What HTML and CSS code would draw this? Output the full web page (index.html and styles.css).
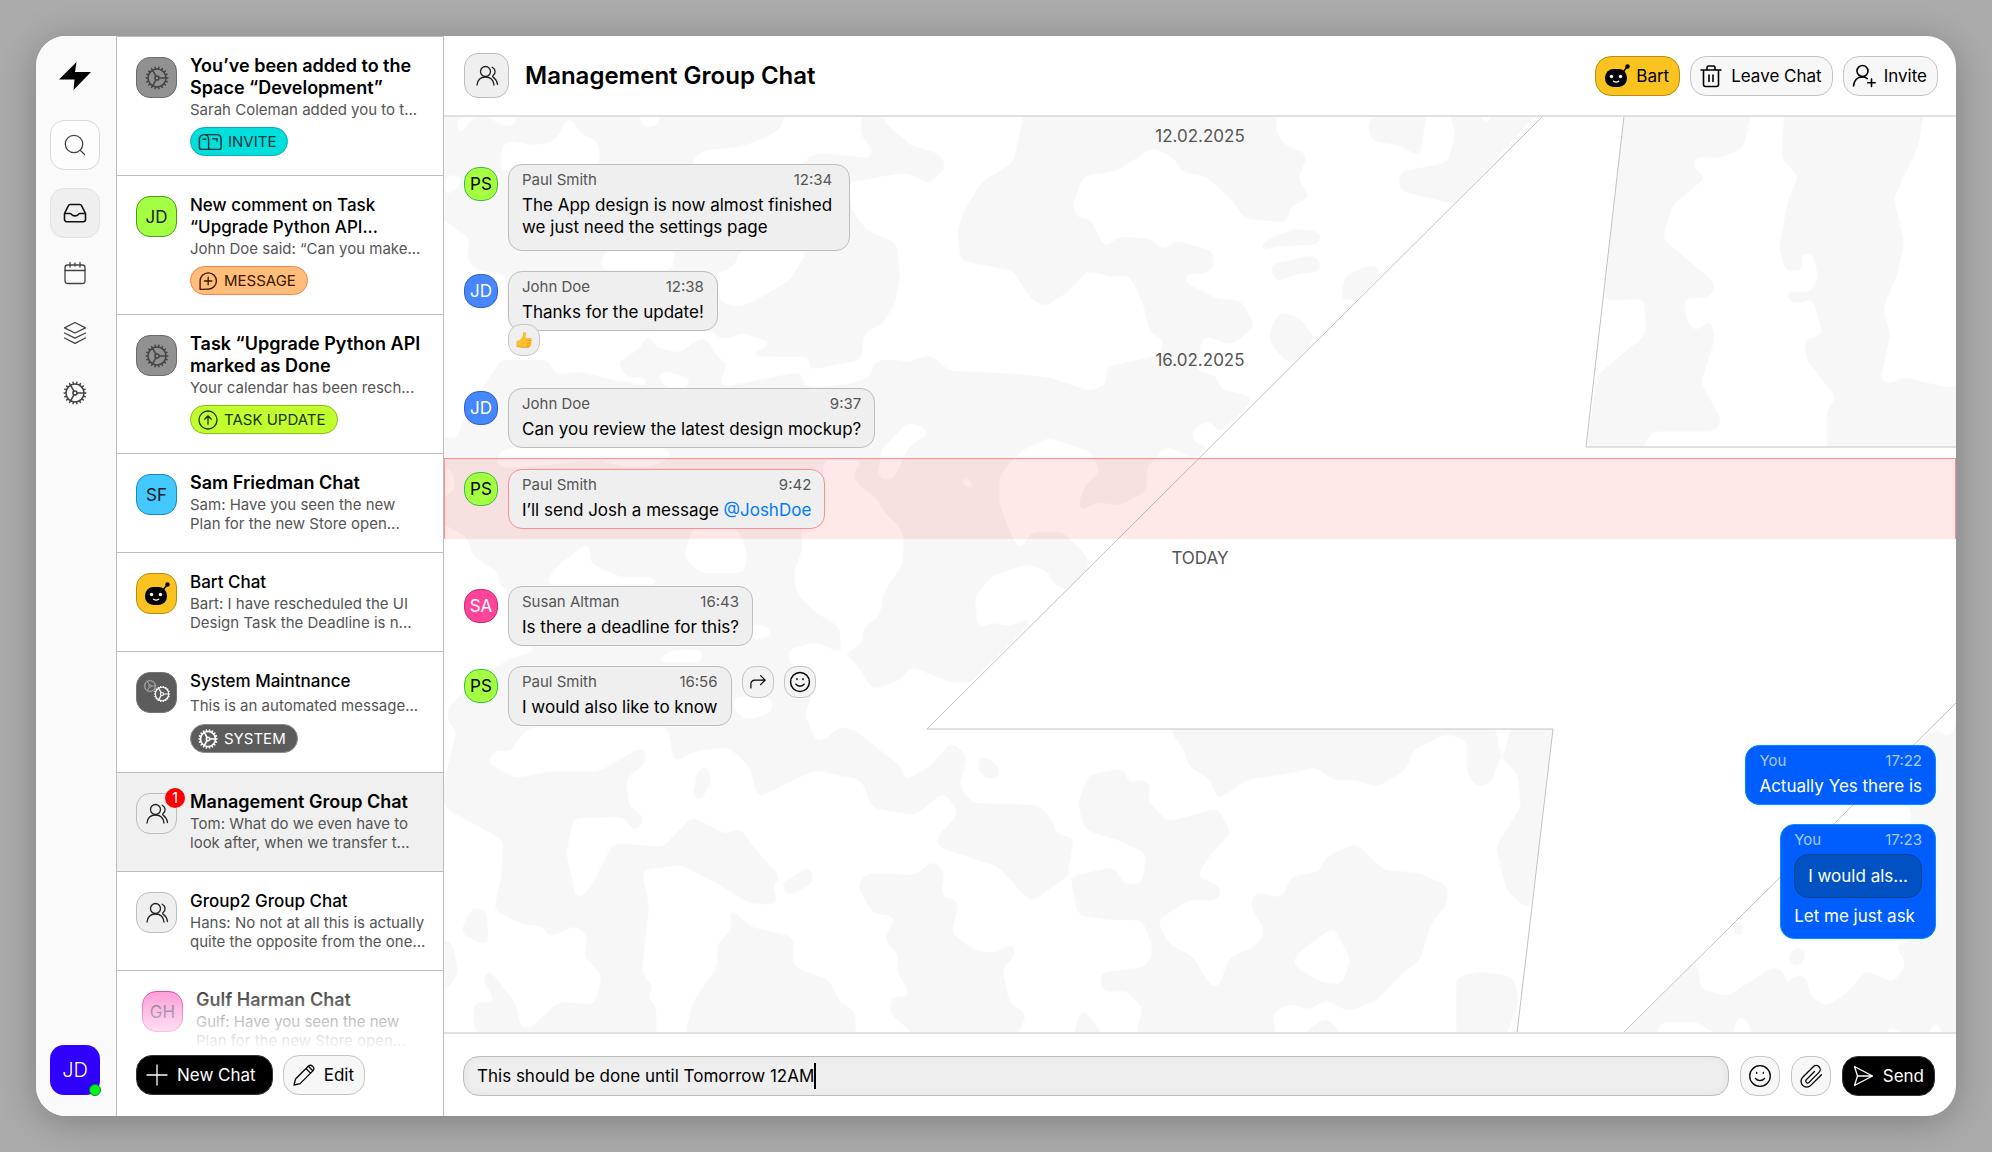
FILE: index.html
```html
<!DOCTYPE html>
<html lang="en">
<head>
    <meta charset="UTF-8">
    <meta name="viewport" content="width=device-width, initial-scale=1.0">
    <title>Management Group Chat</title>
    <link rel="stylesheet" href="styles.css">
</head>
<body>
    <svg class="sprite" aria-hidden="true">
        <symbol id="i-gear" viewBox="2 2 20 20">
            <circle cx="12" cy="12" r="1.7"/>
            <path d="M4.5 12a7.5 7.5 0 0 0 15 0m-15 0a7.5 7.5 0 1 1 15 0m-15 0H3m16.5 0H21m-1.5 0h-5.8m-10.2 3.1 1.4-.5m14.1-5.2 1.4-.5M5.1 17.8l1.2-1m11.4-9.6 1.2-1M7.5 19.8l.8-1.3m7.5-13 .7-1.3m-6.1 16.7.3-1.5m2.6-14.8.3-1.5m0 17.8-.3-1.5M10.7 4.6l-.3-1.5m6.1 16.7-.8-1.3M7.5 4.2l3.6 6.3m7.8 7.3-1.2-1M6.3 7.2l-1.2-1m15.4 8.9-1.4-.5M5 9.4l-1.5-.5m7.6 4.6-2.8 5"/>
        </symbol>
        <symbol id="i-users" viewBox="0 0 24 24">
            <circle cx="10.500" cy="7.500" r="5"/>
            <path d="M2 21c.6-5 4-8 8.500-8s7.900 3 8.500 8M17.200 3.200c3.400 1.800 3.900 6 1 8.300-.9.700-.7 1.300.2 1.900 2.500 1.700 3.700 4.300 4.100 7.100"/>
        </symbol>
        <symbol id="i-bot" viewBox="0 0 26 24">
            <path class="bot-line" d="m19 8 4-5"/>
            <circle class="bot-fill" cx="23.500" cy="2.500" r="2.200"/>
            <rect class="bot-fill" x="1" y="5" width="22" height="18" rx="8.500"/>
            <circle class="bot-eye" cx="7.500" cy="12.500" r="1.700"/>
            <circle class="bot-eye" cx="16.500" cy="12.500" r="1.700"/>
            <path class="bot-mouth" d="M9.500 17.200c1.500 1.100 3.700 1.100 5.200 0"/>
        </symbol>
        <symbol id="i-smile" viewBox="0 0 24 24">
            <circle cx="12" cy="12" r="10.300"/>
            <path d="M7.500 14.500c2.300 2.700 6.700 2.700 9 0M8.700 8.500v.8M15.300 8.500v.8"/>
        </symbol>
    </svg>

    <div class="window">
        <nav class="rail">
            <a class="logo" href="#" aria-label="Home">
                <svg viewBox="0 0 32 28"><path d="M17.500 0 0 17.500h15.500L14.500 28 32 10H16z"/></svg>
            </a>
            <button class="rail-button rail-search" aria-label="Search">
                <svg class="icon" viewBox="0 0 24 24"><circle cx="11" cy="11" r="8.700"/><path d="m17.500 17.500 4 4"/></svg>
            </button>
            <button class="rail-button rail-active" aria-label="Inbox">
                <svg class="icon icon-bold" viewBox="0 0 24 24"><path d="M1.500 12.500h5.800c.8 0 1.100.5 1.500 1.200.9 1.600 5.500 1.600 6.400 0 .4-.7.7-1.200 1.500-1.200h5.800M5.300 4.800 1.500 12.500v6a2.200 2.200 0 0 0 2.200 2.200h16.600a2.200 2.200 0 0 0 2.200-2.200v-6l-3.800-7.700a2.200 2.200 0 0 0-2-1.300H7.300a2.200 2.200 0 0 0-2 1.300z"/></svg>
            </button>
            <button class="rail-button" aria-label="Calendar">
                <svg class="icon" viewBox="0 0 24 24"><rect x="2" y="4" width="20" height="18.500" rx="2.500"/><path d="M2 9.500h20M7 1.500V6M17 1.500V6M12 2v3"/></svg>
            </button>
            <button class="rail-button" aria-label="Spaces">
                <svg class="icon" viewBox="0 0 24 24"><path d="m12 1.500 10.500 5.300L12 12 1.500 6.800zM1.500 12 12 17.200 22.500 12M1.500 17 12 22.300 22.500 17"/></svg>
            </button>
            <button class="rail-button" aria-label="Settings">
                <svg class="icon"><use href="#i-gear"/></svg>
            </button>
            <button class="profile" aria-label="Profile">JD<span class="online"></span></button>
        </nav>

        <aside class="inbox">
            <ul class="threads">
                <li><a class="thread" href="#">
                    <span class="tile tile-gray"><svg class="icon"><use href="#i-gear"/></svg></span>
                    <span class="thread-text">
                        <strong class="title unread">You’ve been added to the<br>Space “Development”</strong>
                        <span class="preview">Sarah Coleman added you to t...</span>
                        <span class="tag tag-invite"><svg class="icon icon-wide" viewBox="0 0 26 20"><path d="M6.500 2h14a4.500 4.500 0 0 1 4.500 4.500v9.500a2 2 0 0 1-2 2H3.500a2 2 0 0 1-2-2V7a5 5 0 0 1 5-5 5 5 0 0 1 5 5v11M5.500 7h3M16 6.500h4.500V9"/></svg>INVITE</span>
                    </span>
                </a></li>
                <li><a class="thread" href="#">
                    <span class="tile tile-green">JD</span>
                    <span class="thread-text">
                        <strong class="title">New comment on Task<br>“Upgrade Python API...</strong>
                        <span class="preview">John Doe said: “Can you make...</span>
                        <span class="tag tag-message"><svg class="icon" viewBox="0 0 24 24"><path d="M2.500 22v-10a9.800 9.800 0 1 1 9.700 9.800zM12.200 7.500v9M7.700 12h9"/></svg>MESSAGE</span>
                    </span>
                </a></li>
                <li><a class="thread" href="#">
                    <span class="tile tile-gray"><svg class="icon"><use href="#i-gear"/></svg></span>
                    <span class="thread-text">
                        <strong class="title unread">Task “Upgrade Python API<br>marked as Done</strong>
                        <span class="preview">Your calendar has been resch...</span>
                        <span class="tag tag-update"><svg class="icon" viewBox="0 0 24 24"><circle cx="12" cy="12" r="10.800"/><path d="M12 17V7.500M8 11l4-4 4 4"/></svg>TASK UPDATE</span>
                    </span>
                </a></li>
                <li><a class="thread" href="#">
                    <span class="tile tile-sky">SF</span>
                    <span class="thread-text">
                        <strong class="title unread">Sam Friedman Chat</strong>
                        <span class="preview">Sam: Have you seen the new<br>Plan for the new Store open...</span>
                    </span>
                </a></li>
                <li><a class="thread" href="#">
                    <span class="tile tile-bot"><svg class="bot"><use href="#i-bot"/></svg></span>
                    <span class="thread-text">
                        <strong class="title">Bart Chat</strong>
                        <span class="preview">Bart: I have rescheduled the UI<br>Design Task the Deadline is n...</span>
                    </span>
                </a></li>
                <li><a class="thread thread-system" href="#">
                    <span class="tile tile-dark">
                        <svg class="gears" viewBox="0 0 28 28">
                            <use class="gear-dim" href="#i-gear" x="0" y="0" width="14" height="14"/>
                            <use href="#i-gear" x="10" y="6" width="18" height="18"/>
                        </svg>
                    </span>
                    <span class="thread-text">
                        <strong class="title">System Maintnance</strong>
                        <span class="preview">This is an automated message...</span>
                        <span class="tag tag-system"><svg class="icon icon-bold"><use href="#i-gear"/></svg>SYSTEM</span>
                    </span>
                </a></li>
                <li><a class="thread thread-active" href="#">
                    <span class="tile"><svg class="icon"><use href="#i-users"/></svg><span class="badge">1</span></span>
                    <span class="thread-text">
                        <strong class="title unread">Management Group Chat</strong>
                        <span class="preview">Tom: What do we even have to<br>look after, when we transfer t...</span>
                    </span>
                </a></li>
                <li><a class="thread" href="#">
                    <span class="tile"><svg class="icon"><use href="#i-users"/></svg></span>
                    <span class="thread-text">
                        <strong class="title">Group2 Group Chat</strong>
                        <span class="preview">Hans: No not at all this is actually<br>quite the opposite from the one...</span>
                    </span>
                </a></li>
                <li><a class="thread thread-shifted" href="#">
                    <span class="tile tile-pink">GH</span>
                    <span class="thread-text">
                        <strong class="title unread">Gulf Harman Chat</strong>
                        <span class="preview">Gulf: Have you seen the new<br>Plan for the new Store open...</span>
                    </span>
                </a></li>
            </ul>
            <div class="inbox-actions">
                <button class="button button-black button-new"><svg class="icon" viewBox="0 0 24 24"><path d="M12 2v20M2 12h20"/></svg>New Chat</button>
                <button class="button"><svg class="icon" viewBox="0 0 24 24"><path d="m2 22 1.500-6L16.500 3a2.600 2.600 0 0 1 3.700 0l.9.900a2.600 2.600 0 0 1 0 3.700l-13 13zM14 5.500l4.500 4.600M16.300 3.300l4.500 4.500"/></svg>Edit</button>
            </div>
        </aside>

        <main class="chat">
            <header class="chat-header">
                <span class="tile tile-large"><svg class="icon"><use href="#i-users"/></svg></span>
                <h1>Management Group Chat</h1>
                <button class="button button-bot"><svg class="bot"><use href="#i-bot"/></svg>Bart</button>
                <button class="button"><svg class="icon icon-bold" viewBox="0 0 24 24"><path d="M2 6h20M8 6V3.500A1.500 1.500 0 0 1 9.500 2h5A1.500 1.500 0 0 1 16 3.500V6M4.500 6v14.500A2 2 0 0 0 6.500 22.500h11a2 2 0 0 0 2-2V6M10 11v6.500M14 11v6.500"/></svg>Leave Chat</button>
                <button class="button"><svg class="icon icon-bold" viewBox="0 0 24 24"><circle cx="10.500" cy="7" r="5.500"/><path d="M1.500 22c.6-5.500 4-9 9-9 2 0 3.500.6 4.800 1.600M19.500 15v7.500M15.700 18.800h7.500"/></svg>Invite</button>
            </header>

            <section class="messages">
                <svg class="pattern" viewBox="444 117 1512 915" preserveAspectRatio="xMidYMid slice" aria-hidden="true">
                    <filter id="round" x="0" y="0" width="100%" height="100%" color-interpolation-filters="sRGB">
                        <feGaussianBlur stdDeviation="4"/>
                        <feComponentTransfer>
                            <feFuncR type="table" tableValues=".969 .969 .969 .969 1 1 1 1"/>
                            <feFuncG type="table" tableValues=".969 .969 .969 .969 1 1 1 1"/>
                            <feFuncB type="table" tableValues=".969 .969 .969 .969 1 1 1 1"/>
                        </feComponentTransfer>
                    </filter>
                    <g filter="url(#round)">
                        <rect class="gap" x="430" y="100" width="1540" height="950"/>
                        <!-- top left -->
                        <g transform="translate(440 30) scale(.3333)">
                            <path class="land" d="M-30 220H1400V995H-30z"/>
                            <path class="gap" d="M55 255 50 310 72 312 80 285 95 270 150 270 200 290 225 285 240 255zM380 262 400 270 420 310 475 335 480 400 470 420 205 420 180 440 185 350 210 330 270 345 330 340 360 310zM10 445 50 430 68 450 50 480 12 500zM-20 540 50 600 90 620 80 690 110 720 200 735 205 1000 -20 1000zM10 900H820L830 925 880 925 900 905 970 930 1000 930 990 950 940 960 930 1000H10z"/>
                            <path class="land" d="M540 995 600 955 625 905 645 950 720 970 770 930 800 925 840 995z"/>
                            <path class="gap" d="M500 660 480 700 490 722H830L840 820 900 830 950 810 1050 750 1080 700 1110 662z"/>
                            <path class="land" d="M720 650 700 690 700 722H860L890 700 895 650z"/>
                            <path class="gap" d="M585 255 610 292 640 292 680 255zM1035 250 1020 300 960 330 900 350 800 360 760 380 755 410H1090L1100 380 1150 370 1290 385 1305 370 1260 310 1270 250zM1310 250 1380 320 1500 345 1570 345V250zM1570 430H1380L1320 440 1270 450 1225 455 1235 540 1280 600 1370 640 1380 740 1350 830 1330 880 1270 910 1265 1000H1570z"/>
                        </g>
                        <!-- middle left -->
                        <g transform="translate(440 360) scale(.3333)">
                            <path class="land" d="M-30 0H1400V1100H-30z"/>
                            <path class="gap" d="M-30-10H190L130 80 70 180 50 240-30 220zM320-10 345 45 420 35 520 60 620 80 630 50 560 50 520-10zM670 30 760 60 740 85 680 85 650 50zM830 85 840 70 870-10H1120L1080 60 1110 85 1240 70 1290 50 1310-10zM1380 0H1570V40L1510 10 1420 20zM205 265H690L695 290 640 320 540 320 480 300 200 325 160 310 190 265zM-30 310 40 330 45 390-30 440zM-30 470 80 530 100 590 180 640 170 670 205 690V900L100 960 20 1050 30 1100-30 1150zM205 676 310 676 350 620 450 540V610L540 650 640 650 670 676zM760 500 730 590 780 640 890 640 920 630 920 570 890 500zM1080 500 1090 560 1060 640 1070 700 1130 760 1200 800V860L1220 880 1270 850V800L1320 770 1330 700 1390 610V520L1340 440 1250 370 1240 330 1290 300H1150V500zM1400 190 1440 180 1475 220 1460 250 1410 260 1390 330 1330 360 1310 340 1330 290 1400 240zM930 790 990 800 1000 830 930 840zM630 910 700 870 790 870V905zM205 855 330 860 200 900zM1040 870 1130 845 1200 880 1240 900 1300 990 1380 960 1420 920 1560 970V1150H1250L1190 1095 1160 1150H1110L1095 1060 1120 1000 1060 940zM880 1010H1000L995 1060 920 1080 880 1050z"/>
                        </g>
                        <!-- centre and right, above the bolt -->
                        <g transform="translate(880 110) scale(.7015 .4018)">
                            <path class="land" d="M0 80 50 90 85 110 95 140 70 185 40 155 0 165zM208-10H565V60L580 90 610 110 595 175 615 215 585 240 580 280 520 270 500 220 465 165 430 155 420 120 388 93 340 150 290 165 275 230 280 270 300 270 320 345 340 315 385 320 405 350 420 325 475 350V400L450 410 435 400V430L480 470 515 475 535 540 500 585 460 560 450 650 480 660 485 695 535 715 450 870 410 835 380 890V950L340 985 310 975 280 1005 290 940 315 900 300 850 240 815 200 850 170 910V980L185 1050 200 1100 215 1050 260 1050 285 1090 300 1130 268 1195 250 1185 240 1150 210 1130 160 1160 135 1210 140 1300 155 1275 185 1285 230 1250 130 1425 100 1425 45 1385 0 1435V1250L35 1130V1050L0 990V655L70 608 100 650 180 655 240 665 300 700 325 680 320 640 400 610 405 570 385 555 375 480 355 410 330 415 295 400 270 450 235 490 215 470 190 400 115 375 110 300 120 250 145 180 190 130z"/>
                            <path class="gap" d="M40 775 75 800 40 840 20 920H0V850zM110 895 145 945 120 940zM470 770 490 820 450 835 442 800z"/>
                            <path class="land" d="M0 328 20 335 28 420 22 480 0 540zM695 30 720-10H780L770 120 745 90 700 75zM810-10H850L865 50 875-10H945L820 235 740 200V155L810 130 820 60zM538 335 590 295 632 305 625 335 560 340 550 355zM555 385 620 360 632 400 590 410 565 430zM655 470 665 410 700 385 718 400 675 475zM553 560 570 500 600 520 620 570 585 635 560 590z"/>
                            <path class="land" d="M1060-10H1245L1230 95 1195 120 1160 115V150L1180 165 1130 235 1115 320 1190 430 1185 465 1145 470 1150 520 1160 555 1185 520 1190 570 1170 680 1200 770 1190 800 1100 800 1085 850H1006L1022 660 1060 605 1092 560 1090 470 1032 475zM1290-10H1490L1480 90 1445 220 1460 330 1450 410 1430 490 1440 560 1425 680 1440 680 1460 665 1520 690 1560 690V850H1350V740L1365 720 1320 620 1318 570 1345 560 1330 470 1300 485 1288 450 1325 455 1338 420 1330 355 1308 360 1320 400 1290 400 1282 340 1295 220 1310 165 1285 120z"/>
                        </g>
                        <!-- bottom, left of the bolt -->
                        <g transform="translate(440 720) scale(.7207 .3333)">
                            <path class="land" d="M-20 0H25L20 60 5 190V260L45 310 88 360 85 470 75 570 110 610 145 620 150 655 190 615 205 650 200 710 225 765 215 855 165 845 125 925H112L105 850 65 740 60 790 80 845 45 850 50 950H300V860L285 820 300 810 280 760 290 560 280 450 335 435 380 485 430 550 470 555 460 490 475 480 435 380 415 320 400 345 350 290 310 380 240 370 210 500 190 545 175 400 185 295 255 290 270 340 285 290 262 260 258 175 285 130V75L220 155H150L105 175 65 130 75 90 100 95 110 50 140 0zM45 560 64 570 68 680 28 640zM-20 640 18 670 25 760 10 810-20 800z"/>
                            <path class="land" d="M315 0H510L520 60 530 65 555 20 575 30 640 140 645 185 670 150 680 140 710 65 732 110 720 200 740 250 830 255 850 300 855 345 880 350 870 470 820 545 800 500 775 440 690 380V350L720 280 700 215 660 285 600 265 585 180 520 150 440 235 430 140 400 80 350 95 325 130zM746 105 767 120 780 160 765 182 748 160zM358 150 370 130 377 180 360 250 350 230zM580 500 590 460 660 465 685 420 700 460 695 530 720 540 710 640 740 690 770 700 800 665 795 720 780 740 790 850 815 880 800 950H660L625 880V830L655 830 635 760V700L615 655 635 590 600 580zM400 555 430 620 490 650V740L540 780 555 850 575 870 578 950H340L350 850 385 740V670L405 630zM475 490 515 435 518 490 480 530z"/>
                            <path class="land" d="M875 470 935 440 950 495 975 490 980 400 940 360 895 330 885 250 900 165 950 145 955 195 975 175 988 200 980 240 1010 305 1080 265 1098 340 1070 400 1050 470 1085 500 1080 540 1040 540 995 600 1010 670 1045 710 1070 800 1080 805 1095 715 1135 675 1145 630 1125 560 1130 515 1170 535 1180 470 1220 455 1230 410 1270 370 1310 450 1360 460 1400 500 1395 560 1375 610 1360 720 1340 750 1300 840 1260 875 1230 840 1205 870 1180 850 1155 880 1160 950H965L975 860 950 810 920 820 915 760 980 740 990 690 975 600 930 600 885 585zM1008 20H1465L1470 110 1460 185 1440 205 1425 160V60L1395 42 1350 90 1340 150 1300 200 1270 180 1240 180 1215 140 1190 155 1120 180 1078 240 1070 180 1040 140 1030 80zM1480 80 1485 20H1550L1512 575 1480 510 1465 380 1500 260 1495 160 1475 120zM1410 770 1445 755 1490 770 1497 850 1478 950H1410zM878 950 890 860 922 950zM1190 950 1230 892 1255 950z"/>
                            <path class="gap" d="M1240 620 1264 720 1250 798 1215 780 1181 730 1195 690z"/>
                        </g>
                        <!-- bottom right -->
                        <g transform="translate(1660 720) scale(.3333)">
                            <path class="land" d="M-120 950 752 90 835 20 930-70V950z"/>
                            <path class="gap" d="M820 15 860 55 880 35 895-30zM752 255V670H700L740 730 700 790 620 750 560 820 500 860 450 830 440 770 410 765 390 800 405 840 380 830 370 750 340 740 200 830 120 805 115 720 576 255zM0 905H110L180 950H-10zM228 885 262 900 280 950H220zM680 912 745 950H685zM812 915 835 900 848 950H812z"/>
                            <path class="land" d="M235 600 254 615 248 652 224 648 214 612zM410 678 440 690 430 732 400 742 380 710zM400 765 440 780 436 820 400 840 385 800z"/>
                        </g>
                    </g>
                    <path class="bolt" d="M1543 116 927 729H1553L1517 1033H1623L1957 702V447H1586L1624 116z"/>
                </svg>

                <p class="day">12.02.2025</p>
                <article class="message">
                    <span class="avatar avatar-ps">PS</span>
                    <div class="bubble bubble-long">
                        <div class="meta"><span>Paul Smith</span><time>12:34</time></div>
                        <p>The App design is now almost finished<br>we just need the settings page</p>
                    </div>
                </article>
                <article class="message">
                    <span class="avatar avatar-jd">JD</span>
                    <div class="bubble">
                        <div class="meta"><span>John Doe</span><time>12:38</time></div>
                        <p>Thanks for the update!</p>
                        <button class="reaction" aria-label="Thumbs up">
                            <svg viewBox="0 0 20 20">
                                <path fill="#fbc02d" d="M1.500 11.500 6 9.500c2-2 2.800-4.500 3-7C9.200.5 12 .6 12.300 2.800c.2 1.700-.3 3.300-.8 4.900h5.500c2 0 2.300 2.300.9 2.900 1.200.6 1 2.400-.2 2.800.8.7.5 2.200-.6 2.500.5 1.100-.2 2.300-1.600 2.300H9c-2.500 0-4.500-.7-7.500-1.200z"/>
                                <path fill="none" stroke="#e08a1e" stroke-width=".8" d="M13 10.600h4.800M13.300 13.400h4.300M13.200 16h3.800M1.500 17c3 .5 5 1.200 7.500 1.200h6.500"/>
                            </svg>
                        </button>
                    </div>
                </article>
                <p class="day">16.02.2025</p>
                <article class="message">
                    <span class="avatar avatar-jd">JD</span>
                    <div class="bubble">
                        <div class="meta"><span>John Doe</span><time>9:37</time></div>
                        <p>Can you review the latest design mockup?</p>
                    </div>
                </article>
                <article class="message message-alert">
                    <span class="avatar avatar-ps">PS</span>
                    <div class="bubble">
                        <div class="meta"><span>Paul Smith</span><time>9:42</time></div>
                        <p>I’ll send Josh a message <a href="#">@JoshDoe</a></p>
                    </div>
                </article>
                <p class="day">TODAY</p>
                <article class="message">
                    <span class="avatar avatar-sa">SA</span>
                    <div class="bubble">
                        <div class="meta"><span>Susan Altman</span><time>16:43</time></div>
                        <p>Is there a deadline for this?</p>
                    </div>
                </article>
                <article class="message">
                    <span class="avatar avatar-ps">PS</span>
                    <div class="bubble">
                        <div class="meta"><span>Paul Smith</span><time>16:56</time></div>
                        <p>I would also like to know</p>
                    </div>
                    <div class="message-actions">
                        <button aria-label="Reply"><svg class="icon icon-small icon-bold" viewBox="0 0 24 24"><path d="M2.500 20v-5.500a5 5 0 0 1 5-5h14M15.500 3.500l6 6-6 6"/></svg></button>
                        <button aria-label="React"><svg class="icon icon-bold"><use href="#i-smile"/></svg></button>
                    </div>
                </article>
                <article class="message message-own">
                    <div class="bubble">
                        <div class="meta"><span>You</span><time>17:22</time></div>
                        <p>Actually Yes there is</p>
                    </div>
                </article>
                <article class="message message-own">
                    <div class="bubble bubble-quote">
                        <div class="meta"><span>You</span><time>17:23</time></div>
                        <blockquote>I would als...</blockquote>
                        <p>Let me just ask</p>
                    </div>
                </article>
            </section>

            <form class="composer">
                <label class="field">
                    <input type="text" value="This should be done until Tomorrow 12AM" aria-label="Message">
                    <span class="caret"></span>
                </label>
                <button type="button" class="button button-icon" aria-label="Emoji"><svg class="icon"><use href="#i-smile"/></svg></button>
                <button type="button" class="button button-icon" aria-label="Attach a file"><svg class="icon" viewBox="0 0 24 24"><path d="M15.500 7.500 7.300 15.700a1.900 1.900 0 0 0 2.700 2.700L20 8.400a4 4 0 0 0-5.700-5.700L3.700 13.300a5.700 5.700 0 0 0 8.100 8.100L22.500 10.700"/></svg></button>
                <button type="button" class="button button-black"><svg class="icon" viewBox="0 0 24 24"><path d="M3.500 2.500 21.500 12l-18 9.500L6.500 12zM6.500 12h15"/></svg>Send</button>
            </form>
        </main>
    </div>
</body>
</html>
```
FILE: styles.css
```css
* {
    box-sizing: border-box;
}
body {
    margin: 0;
    padding: 36px;
    height: 100vh;
    background: #ababab;
    font-family: Inter, "Liberation Sans", sans-serif;
    font-size: 17px;
    line-height: 22px;
    color: #000;
}
h1, p, ul, blockquote {
    margin: 0;
    padding: 0;
}
ul {
    list-style: none;
}
a {
    color: inherit;
    text-decoration: none;
}
button {
    font: inherit;
    color: inherit;
    cursor: pointer;
    padding: 0;
    border: none;
    background: none;
}
.sprite {
    position: absolute;
    width: 0;
    height: 0;
}
.icon {
    width: 24px;
    height: 24px;
    flex: none;
    fill: none;
    stroke: currentColor;
    stroke-width: 1.3;
    stroke-linecap: round;
    stroke-linejoin: round;
}
.icon-bold {
    stroke-width: 1.6;
}
.icon-wide {
    width: 24px;
}
.bot {
    width: 26px;
    height: 24px;
    flex: none;
}
.bot-fill {
    fill: #000;
}
.bot-line {
    stroke: #000;
    stroke-width: 1.5;
}
.bot-eye {
    fill: #fff;
}
.bot-mouth {
    fill: none;
    stroke: #fff;
    stroke-width: 1.3;
    stroke-linecap: round;
}
.window {
    display: flex;
    height: 100%;
    overflow: hidden;
    background: #fff;
    border-radius: 30px;
    box-shadow: 0 6px 36px rgba(0, 0, 0, 0.25);
}

/* left rail */
.rail {
    display: flex;
    flex-direction: column;
    align-items: center;
    gap: 10px;
    width: 81px;
    flex: none;
    padding: 26px 2px 21px 0;
    background: #fafafa;
    border-right: 1px solid #bdbdbd;
}
.logo {
    width: 32px;
    height: 28px;
    margin-bottom: 20px;
}
.logo svg {
    display: block;
}
.rail-button {
    display: flex;
    align-items: center;
    justify-content: center;
    width: 50px;
    height: 50px;
    border-radius: 14px;
    color: #444;
}
.rail-search {
    background: #fdfdfd;
    border: 1px solid #d9d9d9;
    margin-bottom: 8px;
}
.rail-active {
    background: #efefef;
    border: 1px solid #e2e2e2;
    color: #111;
}
.profile {
    position: relative;
    width: 50px;
    height: 50px;
    margin-top: auto;
    border-radius: 14px;
    background: #2f00ff;
    color: #fff;
    font-size: 20px;
    font-weight: 300;
}
.online {
    position: absolute;
    right: -1px;
    bottom: -1px;
    width: 12px;
    height: 12px;
    border: 1px solid #0a8a1a;
    border-radius: 50%;
    background: #00f51d;
}

/* inbox */
.inbox {
    position: relative;
    width: 327px;
    flex: none;
    overflow: hidden;
    border-right: 1px solid #bdbdbd;
}
.threads {
    border-top: 1px solid #bdbdbd;
}
.thread {
    display: flex;
    gap: 13px;
    padding: 18px 0 19px 19px;
    border-bottom: 1px solid #bdbdbd;
    white-space: nowrap;
}
.thread .tile {
    margin-top: 2px;
}
.thread-active {
    background: #f0f0f0;
}
.thread-shifted {
    padding-left: 25px;
    border-bottom: none;
}
.thread-text {
    display: flex;
    flex-direction: column;
    align-items: flex-start;
}
.title {
    font-weight: 500;
}
.unread {
    font-size: 18px;
    font-weight: 600;
}
.preview {
    margin-top: 1px;
    font-size: 15px;
    line-height: 19px;
    color: #555;
}
.thread-system .preview {
    margin: 4px 0 1px;
}
.tile {
    position: relative;
    display: flex;
    align-items: center;
    justify-content: center;
    width: 41px;
    height: 41px;
    flex: none;
    border: 1px solid #bdbdbd;
    border-radius: 14px;
    background: #efefef;
    color: #222;
}
.tile-large {
    width: 45px;
    height: 45px;
}
.tile-gray {
    background: #919191;
    border-color: #6b6b6b;
    color: #444;
}
.tile-green {
    background: #a4ff42;
    border-color: #43a016;
}
.tile-sky {
    background: #43c8ff;
    border-color: #1889c4;
}
.tile-bot {
    background: #fbc320;
    border-color: #b88c11;
}
.tile-dark {
    background: #5c5c5c;
    border-color: #777;
    color: #fff;
}
.tile-pink {
    background: #ff7ccb;
    border-color: #d3128f;
    color: #52284a;
}
.gears {
    width: 28px;
    height: 28px;
    fill: none;
    stroke: currentColor;
    stroke-width: 1.3;
}
.gear-dim {
    opacity: 0.5;
}
.badge {
    position: absolute;
    top: -6px;
    right: -9px;
    width: 20px;
    height: 20px;
    border-radius: 50%;
    background: #f00;
    color: #fff;
    font-size: 15px;
    line-height: 20px;
    text-align: center;
}
.tag {
    display: flex;
    align-items: center;
    gap: 6px;
    height: 29px;
    margin-top: 8px;
    padding: 0 11px 0 7px;
    border: 1px solid;
    border-radius: 15px;
    font-size: 15px;
}
.tag .icon {
    width: 20px;
    height: 20px;
    stroke-width: 1.6;
}
.tag .icon-wide {
    width: 24px;
}
.tag-invite {
    background: #00dfdb;
    border-color: #18a5b8;
    color: #03323a;
}
.tag-message {
    background: #ffbd7a;
    border-color: #fb7f50;
    color: #3a1500;
}
.tag-update {
    background: #c1ff2e;
    border-color: #8cbb12;
    color: #1d3300;
}
.tag-system {
    background: #5c5c5c;
    border-color: #8a8a8a;
    color: #fff;
}
.inbox-actions {
    position: absolute;
    left: 0;
    right: 0;
    bottom: 0;
    display: flex;
    align-items: flex-end;
    gap: 10px;
    height: 146px;
    padding: 0 0 21px 19px;
    background: linear-gradient(rgba(255, 255, 255, 0), #fff 56%);
}
.button {
    display: flex;
    align-items: center;
    gap: 8px;
    height: 40px;
    padding: 0 10px 0 8px;
    border: 1px solid #c4c4c4;
    border-radius: 16px;
    background: #f7f7f7;
    white-space: nowrap;
}
.button-black {
    background: #000;
    border-color: #333;
    color: #fff;
}
.button-new {
    padding-right: 16px;
}
.button-bot {
    gap: 6px;
    background: #fbc320;
    border-color: #b88c11;
}
.button-icon {
    justify-content: center;
    width: 40px;
    padding: 0;
}

/* chat */
.chat {
    display: flex;
    flex-direction: column;
    flex: 1;
    min-width: 0;
}
.chat-header {
    display: flex;
    align-items: center;
    gap: 10px;
    height: 81px;
    flex: none;
    padding: 0 18px 0 20px;
    border-bottom: 2px solid #e0e0e0;
}
h1 {
    flex: 1;
    padding-left: 6px;
    font-size: 24px;
    font-weight: 600;
    line-height: 30px;
}
.messages {
    position: relative;
    flex: 1;
    min-height: 0;
    overflow: hidden;
    padding-top: 8px;
}
.pattern {
    position: absolute;
    top: 0;
    left: 0;
    width: 100%;
    height: 100%;
}
.land {
    fill: #000;
}
.gap {
    fill: #fff;
}
.bolt {
    fill: #fff;
    stroke: #c2c2c2;
}
.day {
    position: relative;
    margin-top: 18px;
    text-align: center;
    color: #555;
}
.pattern + .day {
    margin-top: 0;
}
.message {
    position: relative;
    display: flex;
    align-items: flex-start;
    gap: 10px;
    margin-top: 20px;
    padding: 0 20px;
}
.day + .message {
    margin-top: 17px;
}
.message-alert {
    margin-top: 10px;
    padding: 10px 19px;
    border: 1px solid #ff8f8f;
    border-bottom: none;
    background: rgba(255, 0, 0, 0.09);
}
.message-alert + .day {
    margin-top: 8px;
}
.avatar {
    width: 34px;
    height: 34px;
    margin-top: 3px;
    flex: none;
    border: 1px solid;
    border-radius: 15px;
    line-height: 32px;
    text-align: center;
}
.avatar-ps {
    background: #a4ff42;
    border-color: #3dbb45;
}
.avatar-jd {
    background: #4687ff;
    border-color: #3561c4;
    color: #fff;
}
.avatar-sa {
    background: #ff4499;
    border-color: #c03074;
    color: #fff;
}
.bubble {
    position: relative;
    padding: 4px 13px 7px;
    border: 1px solid #bdbdbd;
    border-radius: 14px;
    background: #efefef;
}
.bubble-long {
    padding: 4px 17px 12px 13px;
}
.bubble-quote {
    padding-bottom: 11px;
}
.bubble a {
    color: #007aff;
}
.meta {
    display: flex;
    justify-content: space-between;
    gap: 20px;
    margin-bottom: 3px;
    font-size: 15px;
    color: #555;
}
.message-alert .bubble {
    border-color: #ff8f8f;
}
.message-own {
    justify-content: flex-end;
    margin-top: 19px;
}
.message-own .bubble {
    background: #005eff;
    border-color: #0090ff;
    color: #fff;
}
.message-own .meta {
    color: #a9c9ff;
}
.message blockquote {
    margin: 3px 0 7px;
    padding: 10px 13px;
    border: 1px solid #06429a;
    border-radius: 14px;
    background: #0052c2;
}
.reaction {
    position: absolute;
    top: 52px;
    left: -1px;
    display: flex;
    align-items: center;
    justify-content: center;
    width: 32px;
    height: 32px;
    border: 1px solid #c4c4c4;
    border-radius: 13px;
    background: #efefef;
}
.reaction svg {
    width: 18px;
    height: 18px;
}
.message-actions {
    display: flex;
    gap: 10px;
}
.message-actions button {
    display: flex;
    align-items: center;
    justify-content: center;
    width: 32px;
    height: 32px;
    border: 1px solid #c4c4c4;
    border-radius: 13px;
    background: #f3f3f3;
}
.message-actions .icon {
    width: 22px;
    height: 22px;
}
.message-actions .icon-small {
    width: 18px;
    height: 18px;
}
.composer {
    display: flex;
    align-items: center;
    gap: 11px;
    height: 84px;
    flex: none;
    padding: 2px 21px 0 19px;
    border-top: 2px solid #e0e0e0;
}
.field {
    display: flex;
    align-items: center;
    flex: 1;
    min-width: 0;
    height: 40px;
    padding: 0 13px;
    border: 1px solid #bdbdbd;
    border-radius: 16px;
    background: #efefef;
    box-shadow: inset 0 0 10px rgba(0, 0, 0, 0.05);
}
.field input {
    field-sizing: content;
    padding: 0;
    border: none;
    outline: none;
    background: none;
    font: inherit;
    color: inherit;
}
.caret {
    width: 2px;
    height: 26px;
    background: #000;
}
```
